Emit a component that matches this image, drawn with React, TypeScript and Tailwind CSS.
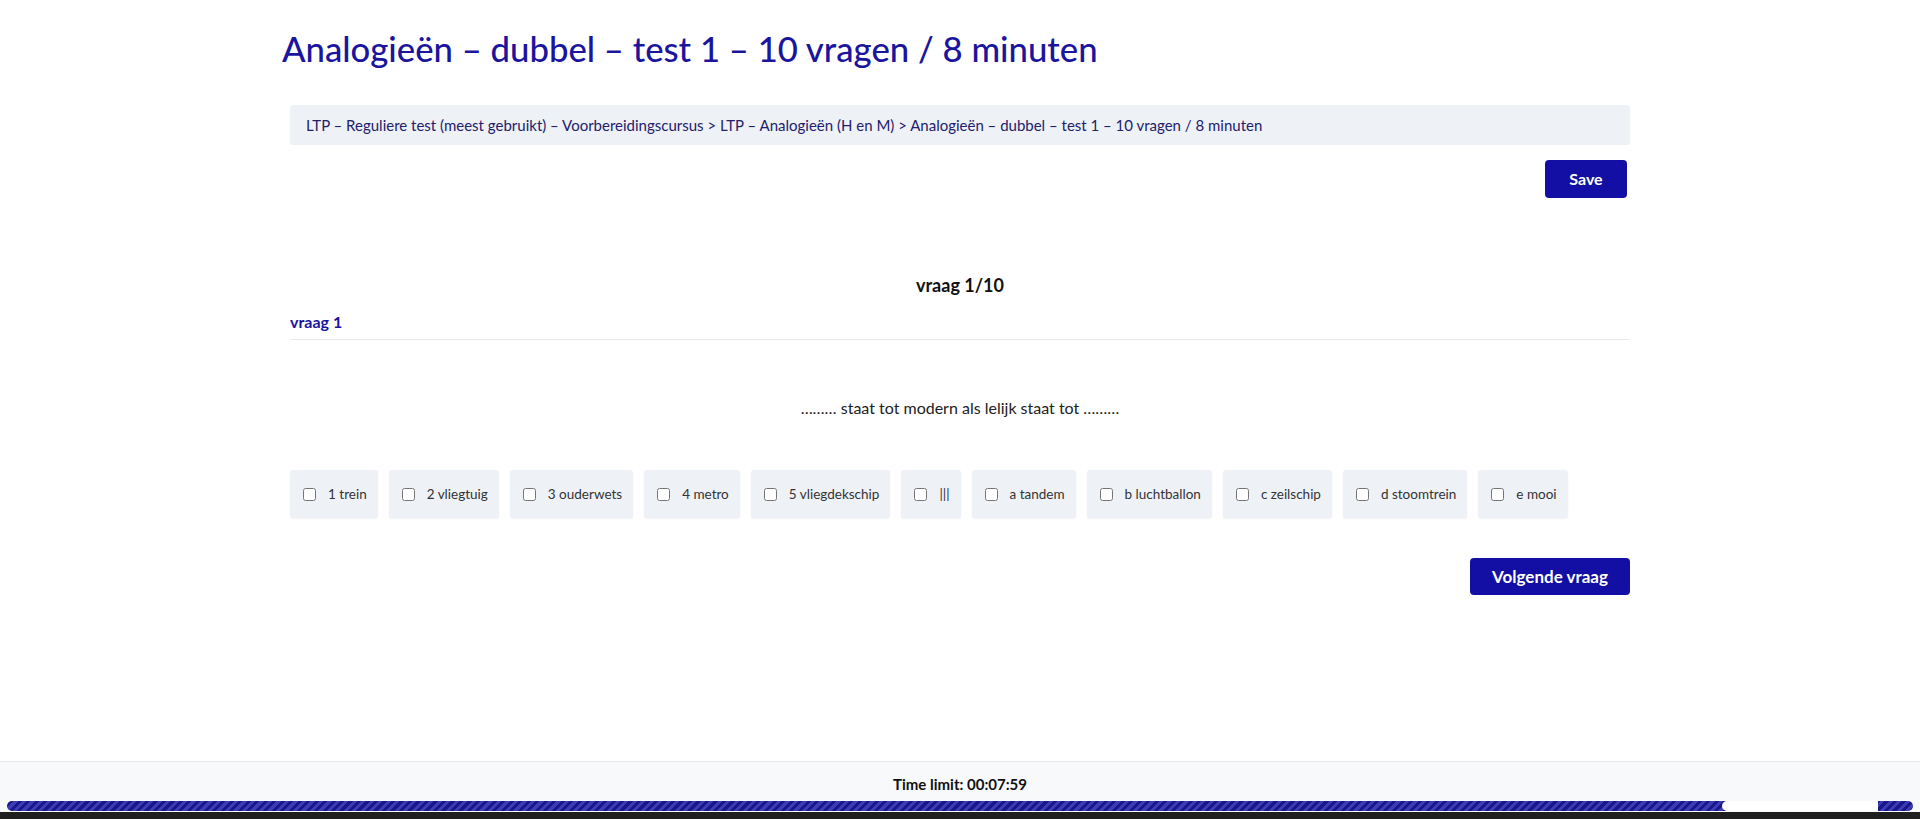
const options = [
  "1 trein",
  "2 vliegtuig",
  "3 ouderwets",
  "4 metro",
  "5 vliegdekschip",
  "|||",
  "a tandem",
  "b luchtballon",
  "c zeilschip",
  "d stoomtrein",
  "e mooi",
];

export default function App() {
  return (
    <div className="flex h-screen flex-col bg-white font-['Lato',sans-serif]">
      <main className="flex-1">
        <div className="mx-auto w-[1356px]">
          <h1 className="pt-[27px] text-[34.7px] font-medium leading-[44px] text-[#1b159e]">
            Analogieën – dubbel – test 1 – 10 vragen / 8 minuten
          </h1>

          <div className="px-2">
            <div className="mt-[34px] flex h-[40px] items-center rounded-[3px] bg-[#eef2f7] px-4 text-[15px] text-[#23206b]">
              LTP – Reguliere test (meest gebruikt) – Voorbereidingscursus &gt; LTP – Analogieën (H en M) &gt; Analogieën – dubbel – test 1 – 10 vragen / 8 minuten
            </div>

            <div className="mt-[15px] flex justify-end pr-[3px]">
              <button
                type="button"
                className="h-[38px] w-[82px] rounded-[4px] bg-[#130ea4] text-[16px] font-bold text-white"
              >
                Save
              </button>
            </div>

            <h2 className="mt-[73px] text-center text-[18px] font-bold leading-[28px] text-[#111]">
              vraag 1/10
            </h2>
            <h3 className="mt-[13px] text-[16px] font-bold leading-[20px] text-[#1b159e]">
              vraag 1
            </h3>
            <hr className="mt-[7px] border-t border-[#e8eaee]" />

            <p className="mt-[56px] text-center text-[16px] leading-[24px] text-[#222]">
              ……… staat tot modern als lelijk staat tot ………
            </p>

            <div className="mt-[50px] flex gap-[11px]">
              {options.map((o) => (
                <label
                  key={o}
                  className="flex h-[48px] items-center gap-[12px] rounded-[3px] bg-[#eef2f7] pl-[13px] pr-[11px] text-[13.5px] text-[#333] shadow-[0_1px_2px_rgba(0,0,0,0.06)]"
                >
                  <input type="checkbox" className="m-0 h-[13px] w-[13px]" />
                  <span>{o}</span>
                </label>
              ))}
            </div>

            <div className="mt-[40px] flex justify-end">
              <button
                type="button"
                className="h-[37px] w-[160px] rounded-[4px] bg-[#130ea4] text-[17px] font-bold text-white"
              >
                Volgende vraag
              </button>
            </div>
          </div>
        </div>
      </main>

      <footer className="border-t border-[#e5e7eb] bg-[#f8f9fb]">
        <div className="pt-[12px] text-center text-[15px] font-bold leading-[20px] text-[#111]">
          Time limit: 00:07:59
        </div>
        <div className="relative mx-[7px] mt-[7px] h-[10px] rounded-full bg-[repeating-linear-gradient(-45deg,#1a1888_0px,#1a1888_3px,#3b3bb5_3px,#3b3bb5_6px)]">
          <span className="absolute top-0 left-[1715px] h-[10px] w-[156px] rounded-l-full bg-white" />
        </div>
        <div className="mt-px h-[7px] bg-[#1f1f1f]" />
      </footer>
    </div>
  );
}
